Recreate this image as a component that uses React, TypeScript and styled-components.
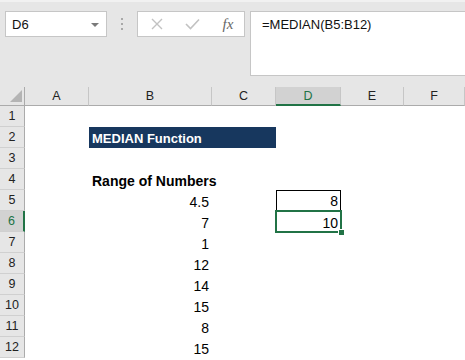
import React from 'react';
import styled, { createGlobalStyle } from 'styled-components';

const GlobalStyle = createGlobalStyle`
  html, body {
    margin: 0;
    padding: 0;
    background: #ffffff;
    overflow: hidden;
  }
  body {
    font-family: "Liberation Sans", Arial, sans-serif;
  }
`;

const green = '#217346';

const Window = styled.div`
  width: 465px;
  height: 360px;
  display: flex;
  flex-direction: column;
  overflow: hidden;
`;

const Toolbar = styled.div`
  height: 87px;
  flex-shrink: 0;
  box-sizing: border-box;
  background: #e6e6e6;
  border-top: 2px solid #f1f1f1;
  display: flex;
  align-items: flex-start;
  padding: 9px 0 0 5px;
`;

const NameBox = styled.div`
  width: 102px;
  height: 26px;
  box-sizing: border-box;
  background: #fff;
  border: 1px solid #c6c6c6;
  display: flex;
  align-items: center;
  justify-content: space-between;
  padding: 0 7px 0 6px;
  font-size: 13px;
  color: #111;
`;

const DropArrow = styled.span`
  width: 0;
  height: 0;
  border-left: 4px solid transparent;
  border-right: 4px solid transparent;
  border-top: 4px solid #7a7a7a;
  margin-top: 1px;
`;

const Grip = styled.div`
  width: 30px;
  height: 26px;
  display: flex;
  flex-direction: column;
  align-items: center;
  justify-content: center;
  gap: 3px;
`;

const GripDot = styled.span`
  width: 2px;
  height: 2px;
  background: #a8a8a8;
`;

const FxButtons = styled.div`
  width: 108px;
  height: 26px;
  box-sizing: border-box;
  background: #fff;
  border: 1px solid #c6c6c6;
  display: grid;
  grid-template-columns: 37px 35px 1fr;
  align-items: center;
  justify-items: center;
`;

const FxLabel = styled.span`
  font-family: "Liberation Serif", "Times New Roman", serif;
  font-style: italic;
  font-size: 15px;
  color: #666;
  margin-left: 2px;
`;

const FormulaInput = styled.div`
  flex: 1;
  height: 65px;
  margin-left: 5px;
  box-sizing: border-box;
  background: #fff;
  border: 1px solid #c6c6c6;
  border-right: none;
  padding: 5px 0 0 11px;
  font-size: 13px;
  line-height: 16px;
  color: #111;
`;

const Sheet = styled.div`
  display: grid;
  grid-template-columns: 25px 64px 123px 64px 65px 63px 1fr;
  grid-template-rows: 19px repeat(12, 21px);
`;

const Corner = styled.div`
  background: #e6e6e6;
  box-sizing: border-box;
  border-right: 1px solid #ababab;
  border-bottom: 1px solid #ababab;
  display: flex;
  align-items: flex-end;
  justify-content: flex-end;
  padding: 0 2px 3px 0;
`;

const CornerTriangle = styled.span`
  width: 0;
  height: 0;
  border-left: 12px solid transparent;
  border-bottom: 12px solid #b4b4b4;
`;

const ColHeader = styled.div<{ active?: boolean }>`
  box-sizing: border-box;
  background: ${({ active }) => (active ? '#d2d2d2' : '#e6e6e6')};
  border-right: 1px solid #c6c6c6;
  border-bottom: ${({ active }) => (active ? `2px solid ${green}` : '1px solid #ababab')};
  color: ${({ active }) => (active ? green : '#222')};
  font-size: 12.5px;
  display: flex;
  align-items: center;
  justify-content: center;
  padding-top: ${({ active }) => (active ? '1px' : '0')};
`;

const RowHeader = styled.div<{ active?: boolean }>`
  box-sizing: border-box;
  background: ${({ active }) => (active ? '#d2d2d2' : '#e6e6e6')};
  border-right: ${({ active }) => (active ? `2px solid ${green}` : '1px solid #ababab')};
  border-bottom: 1px solid #d0d0d0;
  color: ${({ active }) => (active ? green : '#222')};
  font-size: 12.5px;
  display: flex;
  align-items: center;
  justify-content: center;
`;

const Cell = styled.div<{ align?: 'left' | 'right'; bold?: boolean; boxed?: boolean; span?: number }>`
  box-sizing: border-box;
  grid-column: ${({ span }) => (span ? `span ${span}` : 'auto')};
  display: flex;
  align-items: flex-end;
  justify-content: ${({ align }) => (align === 'right' ? 'flex-end' : 'flex-start')};
  padding: 0 3px;
  line-height: 18px;
  font-size: 14px;
  font-weight: ${({ bold }) => (bold ? 700 : 400)};
  color: #000;
  white-space: nowrap;
  border: ${({ boxed }) => (boxed ? '1px solid #000' : 'none')};
  padding-right: ${({ boxed }) => (boxed ? '2px' : '3px')};
`;

const TitleCell = styled(Cell)`
  background: #17375e;
  color: #fff;
  font-size: 13px;
  align-items: center;
  line-height: 16px;
  padding-top: 2px;
`;

const ActiveCell = styled(Cell)`
  position: relative;
  outline: 2px solid ${green};
  outline-offset: -1px;

  &::after {
    content: '';
    position: absolute;
    right: -3px;
    bottom: -3px;
    width: 5px;
    height: 5px;
    background: ${green};
    border-left: 1px solid #fff;
    border-top: 1px solid #fff;
  }
`;

const columns = ['A', 'B', 'C', 'D', 'E', 'F'];
const numbers = ['4.5', '7', '1', '12', '14', '15', '8', '15'];

const CrossIcon = () => (
  <svg width="12" height="12" viewBox="0 0 12 12">
    <path d="M1 1 L11 11 M11 1 L1 11" stroke="#c2c2c2" strokeWidth="1.4" fill="none" />
  </svg>
);

const CheckIcon = () => (
  <svg width="15" height="12" viewBox="0 0 15 12">
    <path d="M1 6 L5.5 10.5 L14 1.5" stroke="#c2c2c2" strokeWidth="1.6" fill="none" />
  </svg>
);

const App: React.FC = () => {
  const rows = Array.from({ length: 12 }, (_, i) => i + 1);

  const renderRow = (r: number) => {
    const cells: React.ReactNode[] = [
      <RowHeader key={`h${r}`} active={r === 6}>
        {r}
      </RowHeader>,
      <Cell key={`a${r}`} />,
    ];

    if (r === 2) {
      cells.push(
        <TitleCell key="b2" bold span={2}>
          MEDIAN Function
        </TitleCell>
      );
    } else {
      let content: React.ReactNode = null;
      let align: 'left' | 'right' = 'left';
      let bold = false;
      if (r === 4) {
        content = 'Range of Numbers';
        bold = true;
      } else if (r >= 5) {
        content = numbers[r - 5];
        align = 'right';
      }
      cells.push(
        <Cell key={`b${r}`} align={align} bold={bold}>
          {content}
        </Cell>,
        <Cell key={`c${r}`} />
      );
    }

    if (r === 5) {
      cells.push(
        <Cell key="d5" align="right" boxed>
          8
        </Cell>
      );
    } else if (r === 6) {
      cells.push(
        <ActiveCell key="d6" align="right">
          10
        </ActiveCell>
      );
    } else {
      cells.push(<Cell key={`d${r}`} />);
    }

    cells.push(<Cell key={`e${r}`} />, <Cell key={`f${r}`} />);
    return cells;
  };

  return (
    <Window>
      <GlobalStyle />
      <Toolbar>
        <NameBox>
          <span>D6</span>
          <DropArrow />
        </NameBox>
        <Grip>
          <GripDot />
          <GripDot />
          <GripDot />
        </Grip>
        <FxButtons>
          <CrossIcon />
          <CheckIcon />
          <FxLabel>fx</FxLabel>
        </FxButtons>
        <FormulaInput>=MEDIAN(B5:B12)</FormulaInput>
      </Toolbar>
      <Sheet>
        <Corner>
          <CornerTriangle />
        </Corner>
        {columns.map((c) => (
          <ColHeader key={c} active={c === 'D'}>
            {c}
          </ColHeader>
        ))}
        {rows.map(renderRow)}
      </Sheet>
    </Window>
  );
};

export default App;
